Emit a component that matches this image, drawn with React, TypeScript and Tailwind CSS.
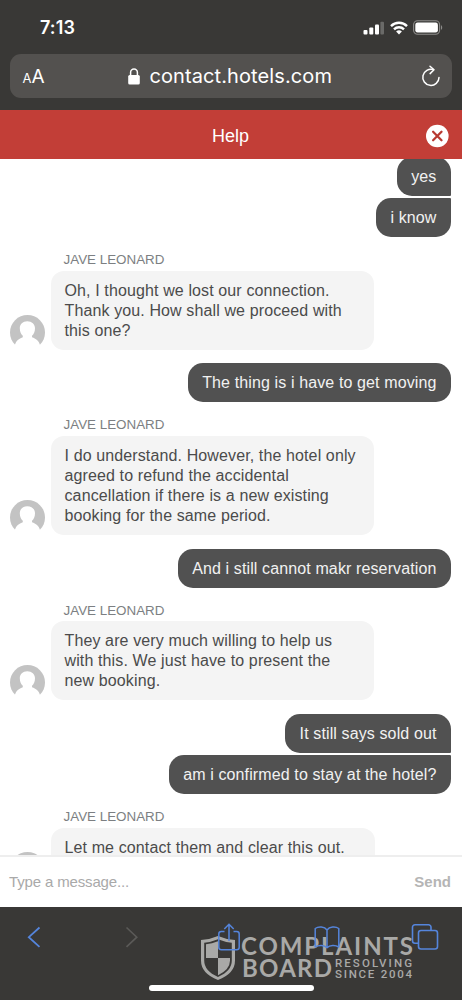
import type { ReactNode } from "react"
import clsx from "clsx"

function StatusBar() {
  return (
    <div className="flex h-[54px] items-center justify-between pl-[40px] pr-[19px] pt-[1px]">
      <span className="font-['Inter'] text-[18px] font-semibold leading-none tracking-[0.1px]">7:13</span>
      <div className="flex items-center gap-[5px]">
        {/* Signal */}
        <svg className="h-[14px] w-[22px]" viewBox="0 0 22 14" fill="currentColor">
          <rect x="0.5" y="9" width="4" height="4.5" rx="1" />
          <rect x="6.3" y="6.5" width="4" height="7" rx="1" />
          <rect x="12" y="3.5" width="4" height="10" rx="1" />
          <rect x="17.4" y="0.8" width="3.6" height="12.7" rx="1" opacity="0.25" />
        </svg>
        {/* Wifi */}
        <svg className="h-[14px] w-[18px]" viewBox="0 0 18 14" fill="none" stroke="currentColor" strokeWidth="2.4">
          <path d="M1 5.1a11.3 11.3 0 0 1 16 0" />
          <path d="M4 8.3a7.1 7.1 0 0 1 10 0" />
          <path d="M9 13.6l-2.9-3a4.1 4.1 0 0 1 5.8 0z" fill="currentColor" stroke="none" />
        </svg>
        {/* Battery */}
        <svg className="h-[15px] w-[30px]" viewBox="0 0 30 15" fill="none">
          <rect x="0.6" y="0.8" width="26" height="13.4" rx="4" stroke="#8d8c8a" strokeWidth="1.1" />
          <rect x="2.3" y="2.5" width="22.6" height="10" rx="2.3" fill="#fff" />
          <path d="M28 5.2c1.6.6 1.6 4 0 4.6z" fill="#8d8c8a" />
        </svg>
      </div>
    </div>
  )
}

function AddressBar() {
  return (
    <div className="mx-[10px] flex h-[44px] items-center justify-between rounded-[11px] bg-[#53514f] pl-[12.5px] pr-[11px]">
      <div className="flex w-[37px] items-baseline font-['Inter'] leading-none">
        <span className="text-[13px]">A</span>
        <span className="text-[19px]">A</span>
      </div>
      <div className="flex items-center gap-[9px]">
        <svg className="h-[17px] w-[12px]" viewBox="0 0 12 17" fill="none">
          <rect x="0.2" y="7" width="11.6" height="9.6" rx="1.5" fill="#fff" />
          <path d="M2.6 8V4.4a3.4 3.4 0 0 1 6.8 0V8" stroke="#fff" strokeWidth="1.5" />
        </svg>
        <span className="whitespace-nowrap font-['Inter'] text-[20px] leading-none tracking-[0.1px]">contact.hotels.com</span>
      </div>
      <div className="flex w-[40px] justify-end">
        <svg
          className="h-[22px] w-[20px]"
          viewBox="0 0 20 22"
          fill="none"
          stroke="currentColor"
          strokeWidth="1.5"
          strokeLinecap="round"
          strokeLinejoin="round"
        >
          <path d="M12.4 4.6A8.1 8.1 0 1 0 18 12.4" />
          <path d="M9 1.2l4 3.6-3.9 3.8" />
        </svg>
      </div>
    </div>
  )
}

function ChatHeader() {
  return (
    <div className="grid h-[49px] shrink-0 grid-cols-[1fr_auto_1fr] items-center bg-[#c23e37] px-[13px] text-white">
      <span />
      <span className="pr-[1px] pt-[2px] text-[18px] leading-none">Help</span>
      <svg className="mt-[3px] h-[24px] w-[24px] justify-self-end" viewBox="0 0 24 24">
        <circle cx="12.3" cy="12" r="11.3" fill="#fff" />
        <path d="M8.1 7.8l8.4 8.4M16.5 7.8l-8.4 8.4" stroke="#b83a32" strokeWidth="2.3" strokeLinecap="round" />
      </svg>
    </div>
  )
}

function Avatar() {
  return (
    <svg className="h-[35px] w-[35px] shrink-0" viewBox="0 0 35 35">
      <circle cx="17.5" cy="17.5" r="17.5" fill="#c3c3c3" />
      <path
        d="M17.3 6.2c-4.5 0-7.5 3-7.5 7 0 3.5 1.3 6 3 7.5v1.6C9 23.5 5.9 26 5 29.5L2 35h31l-3.2-5.5c-.8-3.5-4-6-7.8-7.2v-1.6c1.7-1.5 3-4 3-7.5 0-4-3.2-7-7.7-7z"
        fill="#fff"
      />
    </svg>
  )
}

function AgentMessage({ lines, width = "w-[323px]" }: { lines: string[]; width?: string }) {
  return (
    <div className="pt-[16px]">
      <div className="pl-[63.5px] text-[13.4px] leading-[13px] tracking-normal text-[#7c7f82]">JAVE LEONARD</div>
      <div className="mt-[4.5px] flex items-end gap-[6px] pl-[10px]">
        <Avatar />
        <div className={clsx("rounded-[13px] bg-[#f4f4f4] pb-[9px] pl-[13.5px] pt-[10px] text-[#4b4b4b]", width)}>
          {lines.map((line) => (
            <div key={line} className="whitespace-nowrap">
              {line}
            </div>
          ))}
        </div>
      </div>
    </div>
  )
}

function UserMessage({ children, className }: { children: ReactNode; className?: string }) {
  return (
    <div
      className={clsx(
        "mr-[11px] flex h-[39px] items-center self-end whitespace-nowrap rounded-[15px] bg-[#515151] px-[14.5px] pt-[1px] text-[#f1f1f1]",
        className
      )}
    >
      {children}
    </div>
  )
}

function Conversation() {
  return (
    <div className="h-[696px] shrink-0 overflow-hidden bg-white text-[16px] leading-[20px] tracking-[0.12px]">
      <div className="-mt-[2.5px] flex flex-col">
        <UserMessage className="rounded-br-[1px]">yes</UserMessage>
        <UserMessage className="mt-[2.5px] rounded-tr-[1px]">i know</UserMessage>
        <AgentMessage
          lines={["Oh, I thought we lost our connection.", "Thank you. How shall we proceed with", "this one?"]}
        />
        <UserMessage className="mt-[13.75px]">The thing is i have to get moving</UserMessage>
        <AgentMessage
          lines={[
            "I do understand. However, the hotel only",
            "agreed to refund the accidental",
            "cancellation if there is a new existing",
            "booking for the same period.",
          ]}
        />
        <UserMessage className="mt-[13.75px]">And i still cannot makr reservation</UserMessage>
        <AgentMessage
          lines={["They are very much willing to help us", "with this. We just have to present the", "new booking."]}
        />
        <UserMessage className="mt-[13.75px] rounded-br-[1px]">It still says sold out</UserMessage>
        <UserMessage className="mt-[2.5px] rounded-tr-[1px]">am i confirmed to stay at the hotel?</UserMessage>
        <AgentMessage width="w-[324px]" lines={["Let me contact them and clear this out.", "\u00a0"]} />
      </div>
    </div>
  )
}

function MessageInput() {
  return (
    <div className="flex h-[52px] shrink-0 items-center justify-between border-t-2 border-[#eeeeee] bg-white pb-[2px] pl-[9px] pr-[11px] text-[15px] leading-none">
      <span className="tracking-[-0.15px] text-[#a9a9a9]">Type a message...</span>
      <span className="font-bold text-[#b5b5b5]">Send</span>
    </div>
  )
}

function Watermark() {
  return (
    <svg className="absolute left-[200px] top-[18px] h-[68px] w-[224px]" viewBox="200 925 224 68" fill="#a9a9a7">
      <path
        fillRule="evenodd"
        d="M201 940Q210 939.5 218 936Q226 939.5 235 940V960.5Q235 973.5 218 980Q201 973.5 201 960.5zM204.2 942.8V960.5Q204.2 971 218 976.9Q231.8 971 231.8 960.5V942.8Q225 942.2 218 939.3Q211 942.2 204.2 942.8z"
      />
      <path d="M206 944.3Q212 943.7 218 941.3V958H206z" />
      <path d="M218 958h12v2.5q0 9-12 14.7z" />
      <g fontFamily="Lato, sans-serif" fontWeight="700">
        <text x="241" y="955" fontSize="24" textLength="172">
          COMPLAINTS
        </text>
        <text x="242" y="977" fontSize="24" textLength="90">
          BOARD
        </text>
      </g>
      <g fontFamily="Roboto, sans-serif" fontWeight="500" fontSize="11.5">
        <text x="335" y="967" textLength="77">
          RESOLVING
        </text>
        <text x="335" y="978" textLength="77">
          SINCE 2004
        </text>
      </g>
    </svg>
  )
}

function BrowserToolbar() {
  return (
    <div className="relative flex h-[93px] shrink-0 flex-col justify-between bg-[#393836]">
      <Watermark />
      <div className="relative -ml-[15px] grid w-[489px] grid-cols-5 justify-items-center pt-[14px] text-[#5585dc]">
        <svg className="h-[32px] w-[14px]" viewBox="0 0 14 32" fill="none" stroke="currentColor" strokeWidth="1.8">
          <path d="M12.5 6.5L1.8 16.2l10.7 9.7" />
        </svg>
        <svg className="h-[32px] w-[14px] text-[#5b5a58]" viewBox="0 0 14 32" fill="none" stroke="currentColor" strokeWidth="1.6">
          <path d="M1.5 6.5l10.3 9.7-10.3 9.7" />
        </svg>
        {/* Share */}
        <svg className="h-[32px] w-[24px]" viewBox="0 0 24 32" fill="none" stroke="currentColor" strokeWidth="1.5">
          <path d="M7.5 10.5H4.3a2.5 2.5 0 0 0-2.5 2.5v13.2a2.5 2.5 0 0 0 2.5 2.5h15.4a2.5 2.5 0 0 0 2.5-2.5V13a2.5 2.5 0 0 0-2.5-2.5h-3.2" />
          <path d="M12 20V3.5M7.3 8L12 3.2 16.7 8" />
        </svg>
        {/* Bookmarks */}
        <svg className="h-[32px] w-[26px]" viewBox="0 0 26 32" fill="none" stroke="currentColor" strokeWidth="1.5" strokeLinejoin="round">
          <path d="M13 9C10.5 5.5 4.5 5.2 1.2 7.5V26c3.5-2 9-2 11.8.8 2.8-2.8 8.3-2.8 11.8-.8V7.5C21.5 5.2 15.5 5.5 13 9zM13 9v17.5" />
        </svg>
        {/* Tabs */}
        <svg className="h-[32px] w-[28px]" viewBox="0 0 28 32" fill="none" stroke="currentColor" strokeWidth="1.6">
          <path d="M7.5 22.2H4a2.5 2.5 0 0 1-2.5-2.5V6.3A2.5 2.5 0 0 1 4 3.8h13.5A2.5 2.5 0 0 1 20 6.3v3.2" />
          <rect x="7.5" y="9.5" width="19" height="18.5" rx="2.5" />
        </svg>
      </div>
      <div className="mb-[9px] h-[6px] w-[165px] self-center rounded-full bg-white" />
    </div>
  )
}

export default function App() {
  return (
    <div className="flex h-[1000px] w-[462px] flex-col overflow-hidden bg-white font-['Liberation_Sans',sans-serif]">
      <div className="h-[110px] shrink-0 bg-[#393836] text-white">
        <StatusBar />
        <AddressBar />
      </div>
      <ChatHeader />
      <Conversation />
      <MessageInput />
      <BrowserToolbar />
    </div>
  )
}
